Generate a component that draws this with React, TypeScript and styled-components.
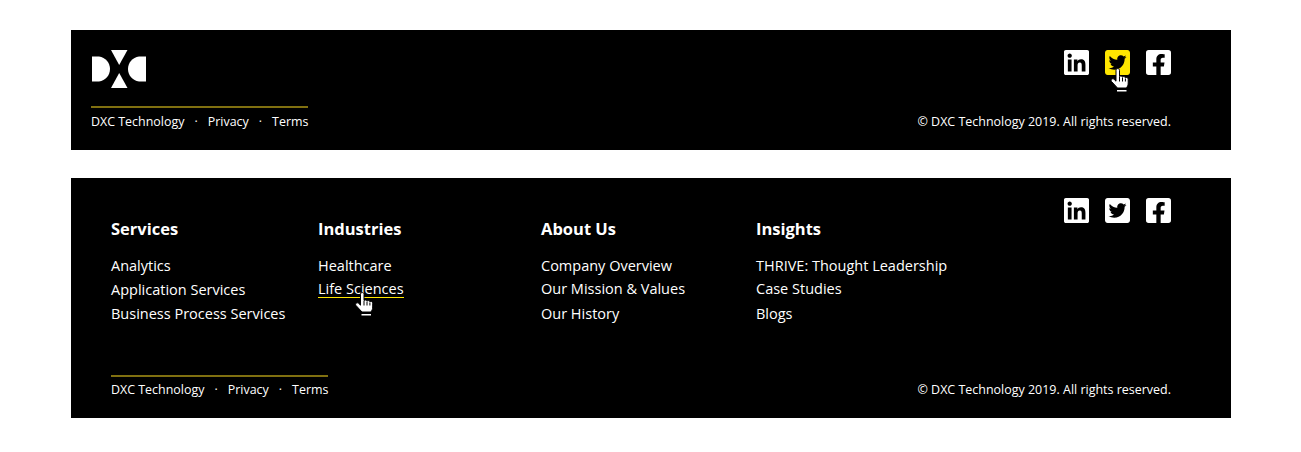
import React from "react";
import styled, { createGlobalStyle } from "styled-components";
import { FaFacebookSquare, FaLinkedin, FaTwitterSquare } from "react-icons/fa";

const GlobalStyle = createGlobalStyle`
  html, body {
    margin: 0;
    padding: 0;
    background: #fff;
    font-family: "Open Sans", "Liberation Sans", sans-serif;
    color: #fff;
  }
`;

const Page = styled.div`
  width: 1160px;
  margin-left: 71px;
  padding-top: 30px;
  display: flex;
  flex-direction: column;
  gap: 28px;
`;

const Panel = styled.footer<{ $height: number }>`
  height: ${(p) => p.$height}px;
  background: #000;
  box-sizing: border-box;
  display: flex;
  flex-direction: column;
  justify-content: space-between;
  padding: 20px 60px 19px 20px;
`;

const TopRow = styled.div`
  display: flex;
  justify-content: space-between;
  align-items: flex-start;
`;

const Socials = styled.div`
  display: flex;
  gap: 16px;
`;

const SocialLink = styled.a<{ $active?: boolean }>`
  position: relative;
  display: block;
  width: 25px;
  height: 25px;
  color: ${(p) => (p.$active ? "#ffe600" : "#fff")};

  svg {
    display: block;
    width: 25px;
    height: 25px;
  }
`;

const BottomRow = styled.div`
  display: flex;
  justify-content: space-between;
  align-items: flex-end;
`;

const Legal = styled.div<{ $indent?: number }>`
  display: inline-flex;
  align-items: center;
  margin-left: ${(p) => p.$indent ?? 0}px;
  border-top: 2px solid #807010;
  padding-top: ${(p) => (p.$indent ? 4 : 5)}px;
  font-size: 12.45px;
  line-height: 18px;
`;

const Dot = styled.span`
  width: 23.3px;
  text-align: center;
`;

const Copyright = styled.div`
  font-size: 12.48px;
  line-height: 18px;
`;

const LogoMark = styled.svg`
  display: block;
  margin: 0 0 0 1px;
`;

const Columns = styled.div`
  display: grid;
  grid-template-columns: 207px 223px 215px 240px;
  padding: 19px 0 0 20px;
`;

const ColumnTitle = styled.h3`
  margin: 0 0 13px;
  font-size: 16.5px;
  line-height: 24px;
  font-weight: 700;
`;

const LinkItem = styled.a<{ $hover?: boolean; $lift?: boolean }>`
  position: relative;
  display: block;
  width: fit-content;
  font-size: 14.5px;
  line-height: 24px;
  margin: ${(p) => (p.$lift ? "-1px 0 1px" : "0")};

  ${(p) =>
    p.$hover &&
    `
    &::after {
      content: "";
      position: absolute;
      left: 0;
      right: 0;
      bottom: 3px;
      height: 1px;
      background: #ffe600;
    }
  `}
`;

const PointerWrap = styled.span<{ $top: number; $left: number }>`
  position: absolute;
  top: ${(p) => p.$top}px;
  left: ${(p) => p.$left}px;
  line-height: 0;
  z-index: 2;
`;

const Logo = () => (
  <LogoMark width="54" height="38" viewBox="0 0 54 38">
    <path fill="#fff" d="M0 6.500h7c6.500 1 11 6 11 12.500s-4.500 11.500-11 12.500H0z" />
    <path fill="#fff" d="M54 6.500h-7c-6.500 1-11 6-11 12.500s4.500 11.500 11 12.500h7z" />
    <path fill="#fff" d="M19 0h16.500L27.200 15z" />
    <path fill="#fff" d="M27.200 23l8.300 15H19z" />
  </LogoMark>
);

const Pointer = () => (
  <svg width="20" height="25" viewBox="0 0 20 25">
    <path
      fill="#fff"
      stroke="#000"
      strokeWidth="1"
      strokeLinejoin="round"
      d="M5.500 2.300c0-2.300 3.500-2.300 3.500 0v6.200c1-.9 2.700-.6 3 .5c1-.8 2.600-.4 2.900.7c1.200-.6 2.800 0 2.800 1.500v3.800c0 2-.8 3.500-1.700 5H7L1 13.500c-1.200-1.700.9-3.600 2.600-2.200l1.900 1.900z"
    />
    <path stroke="#000" strokeWidth="1" d="M9 9v4.500M12 9.500v4M14.900 10.500v3" />
    <rect x="6.500" y="22" width="9.500" height="1.500" fill="#fff" />
  </svg>
);

const squareBox = "0 32 448 448";

const SocialIcons = ({ hoverTwitter }: { hoverTwitter?: boolean }) => (
  <Socials>
    <SocialLink>
      <FaLinkedin viewBox={squareBox} />
    </SocialLink>
    <SocialLink $active={hoverTwitter}>
      <FaTwitterSquare viewBox={squareBox} />
      {hoverTwitter && (
        <PointerWrap $top={18} $left={3}>
          <Pointer />
        </PointerWrap>
      )}
    </SocialLink>
    <SocialLink>
      <FaFacebookSquare viewBox={squareBox} />
    </SocialLink>
  </Socials>
);

const LegalBar = ({ indent }: { indent?: number }) => (
  <BottomRow>
    <Legal $indent={indent}>
      <span>DXC Technology</span>
      <Dot>·</Dot>
      <span>Privacy</span>
      <Dot>·</Dot>
      <span>Terms</span>
    </Legal>
    <Copyright>© DXC Technology 2019. All rights reserved.</Copyright>
  </BottomRow>
);

const columns = [
  { title: "Services", lift: false, links: ["Analytics", "Application Services", "Business Process Services"] },
  { title: "Industries", lift: true, links: ["Healthcare", "Life Sciences"] },
  { title: "About Us", lift: true, links: ["Company Overview", "Our Mission & Values", "Our History"] },
  { title: "Insights", lift: true, links: ["THRIVE: Thought Leadership", "Case Studies", "Blogs"] },
];

export default function App() {
  return (
    <>
      <GlobalStyle />
      <Page>
        <Panel $height={120}>
          <TopRow>
            <Logo />
            <SocialIcons hoverTwitter />
          </TopRow>
          <LegalBar />
        </Panel>
        <Panel $height={240}>
          <TopRow>
            <Columns>
              {columns.map((col) => (
                <div key={col.title}>
                  <ColumnTitle>{col.title}</ColumnTitle>
                  {col.links.map((link, i) => (
                    <LinkItem
                      key={link}
                      $hover={link === "Life Sciences"}
                      $lift={col.lift && i === 1}
                    >
                      {link}
                      {link === "Life Sciences" && (
                        <PointerWrap $top={15} $left={37}>
                          <Pointer />
                        </PointerWrap>
                      )}
                    </LinkItem>
                  ))}
                </div>
              ))}
            </Columns>
            <SocialIcons />
          </TopRow>
          <LegalBar indent={20} />
        </Panel>
      </Page>
    </>
  );
}
